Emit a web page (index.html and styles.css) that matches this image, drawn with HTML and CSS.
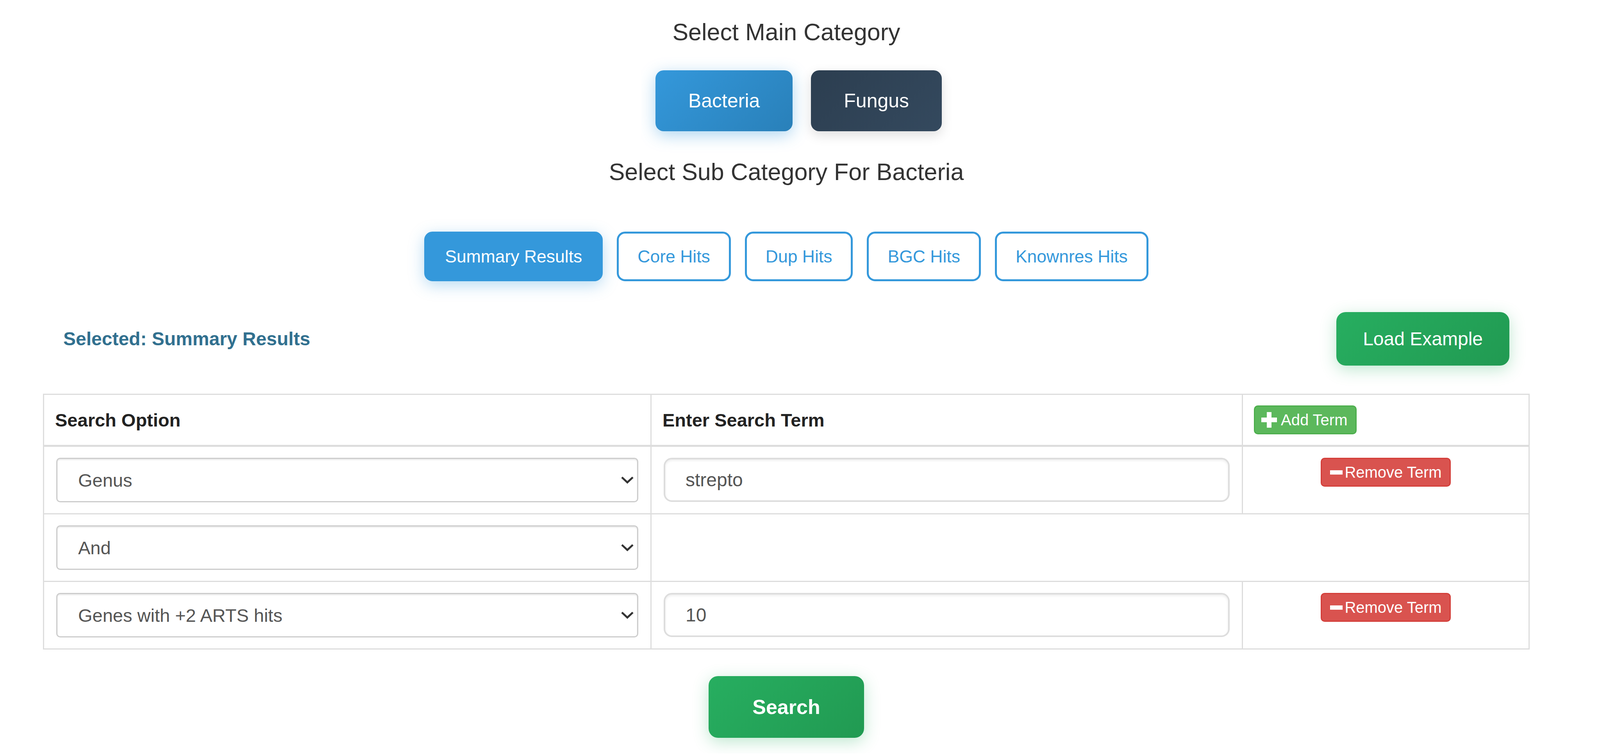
FILE: index.html
```html
<!DOCTYPE html>
<html lang="en">
<head>
  <meta charset="UTF-8">
  <meta name="viewport" content="width=device-width, initial-scale=1.0">
  <title>ARTS Search</title>
  <link rel="stylesheet" href="styles.css">
</head>
<body>
  <div class="container">
    <h2 class="section-title">Select Main Category</h2>

    <div class="main-cat-row">
      <div class="main-cats">
        <button class="main-btn bacteria">Bacteria</button>
        <button class="main-btn fungus">Fungus</button>
      </div>
    </div>

    <h2 class="section-title sub-title">Select Sub Category For Bacteria</h2>

    <div class="sub-cats">
      <button class="sub-btn active">Summary Results</button>
      <button class="sub-btn">Core Hits</button>
      <button class="sub-btn">Dup Hits</button>
      <button class="sub-btn">BGC Hits</button>
      <button class="sub-btn">Knownres Hits</button>
    </div>

    <div class="selected-row">
      <span class="selected-label">Selected: Summary Results</span>
      <button class="green-btn">Load Example</button>
    </div>

    <table class="search-table">
      <colgroup>
        <col class="col-option">
        <col class="col-term">
        <col>
      </colgroup>
      <thead>
        <tr>
          <th>Search Option</th>
          <th>Enter Search Term</th>
          <th>
            <button class="btn-add">
              <svg width="40" height="40" viewBox="0 0 40 40"><rect x="14" y="0" width="12" height="40" fill="#fff"/><rect x="0" y="14" width="40" height="12" fill="#fff"/></svg>
              Add Term
            </button>
          </th>
        </tr>
      </thead>
      <tbody>
        <tr>
          <td>
            <div class="select-wrap">
              <select><option>Genus</option></select>
              <svg class="chevron" width="34" height="20" viewBox="0 0 34 20"><polyline points="3,3 17,16 31,3" fill="none" stroke="#333" stroke-width="5"/></svg>
            </div>
          </td>
          <td><input type="text" value="strepto"></td>
          <td class="action-cell">
            <button class="btn-remove">
              <svg width="32" height="11" viewBox="0 0 32 11"><rect width="32" height="11" fill="#fff"/></svg>Remove Term
            </button>
          </td>
        </tr>
        <tr>
          <td>
            <div class="select-wrap">
              <select><option>And</option></select>
              <svg class="chevron" width="34" height="20" viewBox="0 0 34 20"><polyline points="3,3 17,16 31,3" fill="none" stroke="#333" stroke-width="5"/></svg>
            </div>
          </td>
          <td colspan="2" class="empty-cell"></td>
        </tr>
        <tr>
          <td>
            <div class="select-wrap">
              <select><option>Genes with +2 ARTS hits</option></select>
              <svg class="chevron" width="34" height="20" viewBox="0 0 34 20"><polyline points="3,3 17,16 31,3" fill="none" stroke="#333" stroke-width="5"/></svg>
            </div>
          </td>
          <td><input type="text" value="10"></td>
          <td class="action-cell">
            <button class="btn-remove">
              <svg width="32" height="11" viewBox="0 0 32 11"><rect width="32" height="11" fill="#fff"/></svg>Remove Term
            </button>
          </td>
        </tr>
      </tbody>
    </table>

    <div class="search-row">
      <button class="green-btn search-btn">Search</button>
    </div>
  </div>
</body>
</html>
```

FILE: styles.css
```css
* {
  box-sizing: border-box;
}

body {
  margin: 0;
  background: #fff;
  color: #333;
  font-family: "Liberation Sans", Arial, sans-serif;
}

button,
input,
select {
  font-family: inherit;
}

.container {
  width: 3806px;
  margin-left: 110px;
  padding-top: 47px;
  padding-bottom: 40px;
}

.section-title {
  margin: 0;
  font-size: 61px;
  font-weight: normal;
  line-height: 70px;
  text-align: center;
  color: #333;
}

.sub-title {
  margin-top: 8px;
}

/* main category */
.main-cat-row {
  display: flex;
  justify-content: center;
  padding-left: 68px;
  margin-top: 26px;
}

.main-cats {
  display: flex;
  gap: 47px;
  padding: 37px 41px 61px 36px;
  overflow: hidden;
}

.main-btn {
  border: none;
  border-radius: 21px;
  padding: 49px 84px;
  font-size: 50px;
  line-height: 58px;
  color: #fff;
  cursor: pointer;
}

.bacteria {
  background: linear-gradient(135deg, #3498db, #2980b9);
  box-shadow: 0 10px 40px rgba(52, 152, 219, 0.4);
}

.fungus {
  background: linear-gradient(135deg, #2c3e50, #34495e);
  box-shadow: 0 10px 30px rgba(0, 0, 0, 0.13);
}

/* sub category */
.sub-cats {
  display: flex;
  justify-content: center;
  gap: 36px;
  margin-top: 118px;
}

.sub-btn {
  background: #fff;
  color: #3498db;
  border: 5px solid #3498db;
  border-radius: 21px;
  padding: 33px 48px;
  font-size: 44.5px;
  line-height: 51px;
  cursor: pointer;
}

.sub-btn.active {
  background: #3498db;
  color: #fff;
  box-shadow: 0 10px 39px rgba(52, 152, 219, 0.35);
}

.selected-row {
  display: flex;
  justify-content: space-between;
  align-items: center;
  padding: 0 52px;
  margin-top: 79px;
}

.selected-label {
  font-size: 48px;
  font-weight: bold;
  color: #31708f;
}

.green-btn {
  background: linear-gradient(135deg, #27ae60, #219a52);
  color: #fff;
  border: none;
  border-radius: 24px;
  padding: 41px 68px;
  font-size: 48px;
  line-height: 55px;
  box-shadow: 0 10px 40px rgba(39, 174, 96, 0.3);
  cursor: pointer;
}

/* search table */
.search-table {
  width: 100%;
  margin-top: 72px;
  border-collapse: collapse;
  table-layout: fixed;
  border: 3px solid #ddd;
}

.col-option {
  width: 1555px;
}

.col-term {
  width: 1514px;
}

.search-table th,
.search-table td {
  border: 3px solid #ddd;
  padding: 28px 31px;
  text-align: left;
  vertical-align: top;
}

.search-table th {
  border-bottom-width: 5px;
  padding: 27px 28px;
  font-size: 47px;
  color: #222;
  vertical-align: middle;
}

.action-cell {
  text-align: center !important;
}

.btn-add,
.btn-remove {
  display: inline-flex;
  align-items: center;
  border-radius: 10px;
  font-size: 40px;
  line-height: 46px;
  color: #fff;
  cursor: pointer;
}

.btn-add {
  gap: 10px;
  padding: 11px 21px 11px 16px;
  background: #5cb85c;
  border: 3px solid #4cae4c;
  font-weight: normal;
}

.btn-remove {
  gap: 5px;
  padding: 11px 20px 11px 21px;
  background: #d9534f;
  border: 3px solid #d43f3a;
}

.select-wrap {
  position: relative;
}

.select-wrap select {
  display: block;
  width: 100%;
  height: 114px;
  appearance: none;
  -webkit-appearance: none;
  background: #fff;
  border: 3px solid #ccc;
  border-radius: 10px;
  padding: 0 80px 0 53px;
  font-size: 47px;
  color: #555;
  box-shadow: inset 0 3px 3px rgba(0, 0, 0, 0.075);
}

.chevron {
  position: absolute;
  right: 11px;
  top: 47px;
  pointer-events: none;
}

.search-table input {
  display: block;
  width: 100%;
  height: 113px;
  border: 4px solid #ddd;
  border-radius: 21px;
  padding: 0 52px;
  font-size: 48px;
  color: #555;
  box-shadow: inset 0 3px 6px rgba(0, 0, 0, 0.08);
  outline: none;
}

.search-row {
  display: flex;
  justify-content: center;
  margin-top: 68px;
}

.search-btn {
  padding: 49px 112px;
  font-size: 52px;
  font-weight: bold;
  line-height: 60px;
}
```
